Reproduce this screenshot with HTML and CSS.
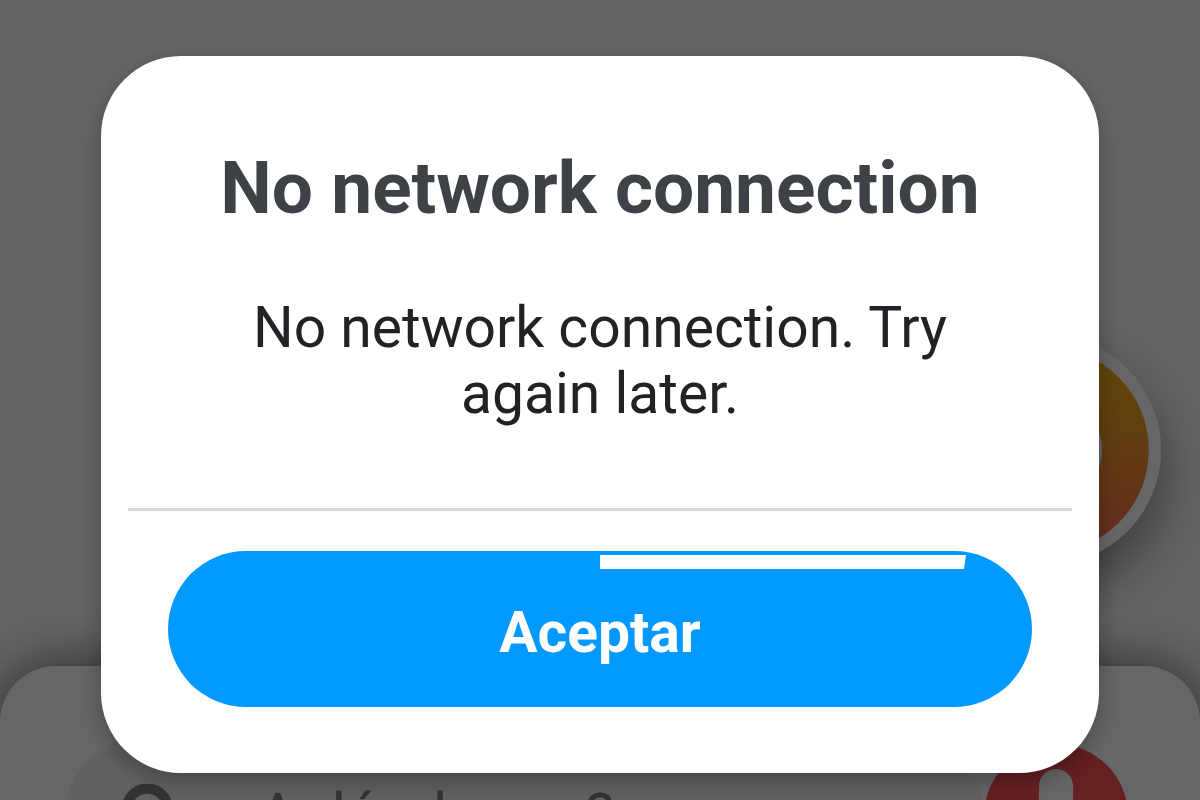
FILE: index.html
```html
<!DOCTYPE html>
<html lang="en">
<head>
<meta charset="UTF-8">
<meta name="viewport" content="width=device-width, initial-scale=1.0">
<title>No network connection</title>
<link rel="stylesheet" href="styles.css">
</head>
<body>

<div class="app">
  <div class="map">
    <button type="button" class="locate" aria-label="Locate">
      <span class="locate-dot"></span>
    </button>
  </div>
  <div class="sheet">
    <label class="search">
      <svg class="search-icon" viewBox="0 0 64 64" aria-hidden="true">
        <circle cx="27" cy="27" r="22" />
        <path d="M43 43 L59 59" />
      </svg>
      <input type="text" class="search-input" placeholder="A dónde vas?" aria-label="A dónde vas?">
    </label>
    <button type="button" class="pin" aria-label="Pin">
      <svg class="pin-icon" viewBox="0 0 144 144" aria-hidden="true">
        <path d="M55 104 V42 a17 17 0 0 1 34 0 V104 Z" />
      </svg>
    </button>
  </div>
</div>

<div class="overlay">
  <div class="modal" role="alertdialog" aria-labelledby="modalTitle" aria-describedby="modalText">
    <h1 id="modalTitle">No network connection</h1>
    <p id="modalText">No network connection. Try again later.</p>
    <hr>
    <button type="button" class="accept">Aceptar</button>
  </div>
</div>

</body>
</html>
```
FILE: styles.css
```css
body, html {
  height: 100%;
  margin: 0;
  overflow: hidden;
  font-family: Roboto, Arial, sans-serif;
}
button, input {
  font-family: inherit;
  border: none;
  padding: 0;
}
button {
  cursor: pointer;
}

/* screen behind the dialog */
.app {
  display: flex;
  flex-direction: column;
  height: 100%;
  background-color: #fbfbfb;
}
.map {
  flex: 1;
  display: flex;
  justify-content: flex-end;
  align-items: flex-end;
  padding: 0 39px 101px 0;
}
.locate {
  display: flex;
  justify-content: center;
  align-items: center;
  box-sizing: border-box;
  width: 230px;
  height: 230px;
  border: 12px solid #ffffff;
  border-radius: 50%;
  background: linear-gradient(#eeb010, #f0a028 35%, #fa7444 90%) padding-box;
  box-shadow: 0 24px 56px rgba(0, 0, 0, 0.45);
}
.locate-dot {
  width: 112px;
  height: 112px;
  border-radius: 50%;
  background-color: white;
}
.sheet {
  flex: 0 0 134px;
  box-sizing: border-box;
  display: flex;
  justify-content: space-between;
  align-items: flex-start;
  overflow: hidden;
  padding: 72px 72px 0 66px;
  border-radius: 56px 56px 0 0;
  background-color: white;
  box-shadow: 0 0 56px rgba(0, 0, 0, 0.6);
}
.search {
  flex: 1;
  min-width: 0;
  display: flex;
  align-items: center;
  box-sizing: border-box;
  gap: 76px;
  height: 152px;
  padding-left: 56px;
  border-radius: 80px;
  background-color: #eff2f6;
}
.search-icon {
  flex: none;
  width: 60px;
  height: 60px;
  fill: none;
  stroke: #808080;
  stroke-width: 11;
}
.search-input {
  flex: 1;
  min-width: 0;
  background: none;
  font-size: 60px;
}
.search-input::placeholder {
  color: #808080;
}
.pin {
  flex: none;
  width: 144px;
  height: 144px;
  margin-top: 6px;
  border-radius: 50%;
  background-color: #fc5055;
}
.pin-icon {
  display: block;
  fill: white;
}

.overlay {
  position: fixed;
  inset: 0;
  padding: 56px 101px 0;
  background-color: rgba(0, 0, 0, 0.6);
}
.modal {
  padding: 90px 27px 66px;
  border-radius: 80px;
  background-color: white;
  box-shadow: 0 8px 24px rgba(0, 0, 0, 0.3);
  text-align: center;
}
.modal h1 {
  margin: 0;
  font-size: 73px;
  line-height: 84px;
  color: #3e4145;
}
.modal p {
  margin: 65px 100px 0;
  font-size: 57px;
  line-height: 66px;
  color: #212225;
}
.modal hr {
  height: 3px;
  margin: 81px 0 40px;
  border: none;
  background-color: #d8d8d8;
}
.accept {
  position: relative;
  display: block;
  box-sizing: border-box;
  width: calc(100% - 80px);
  height: 156px;
  margin: 0 auto;
  padding-top: 6px;
  border-radius: 78px;
  background-color: #0099ff;
  color: white;
  font-size: 57px;
  font-weight: bold;
}
/* light strip along the top edge of the button */
.accept::before {
  content: "";
  position: absolute;
  top: 4px;
  left: 50%;
  width: 366px;
  height: 14px;
  background-color: white;
  clip-path: polygon(0 0, 100% 0, 364px 100%, 0 100%);
}
```
